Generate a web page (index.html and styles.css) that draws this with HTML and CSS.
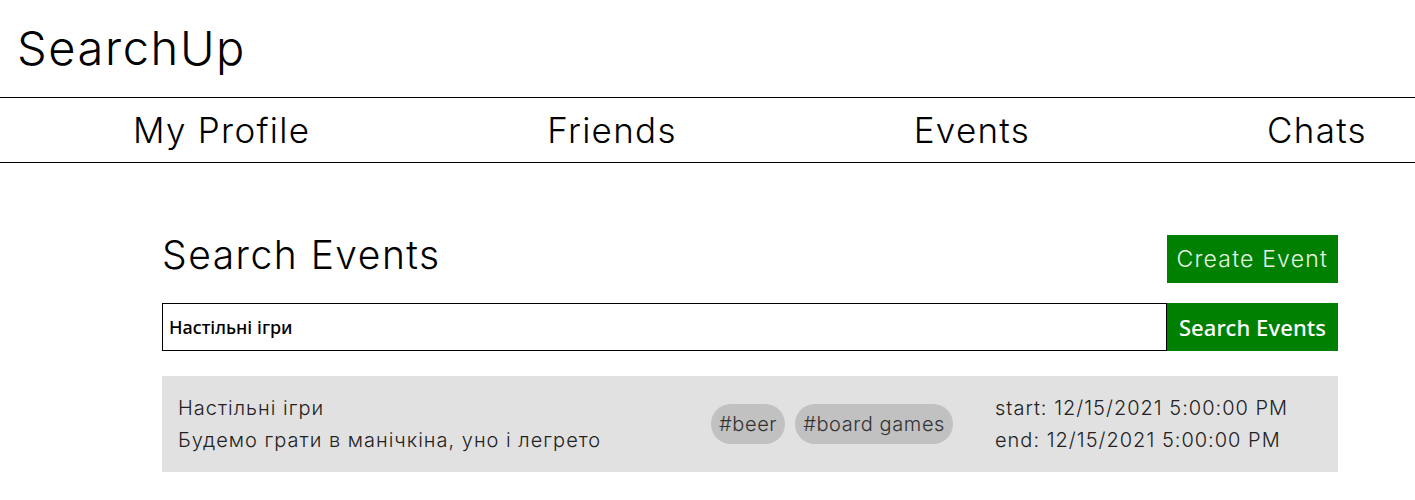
FILE: index.html
```html
<!DOCTYPE html>
<html lang="uk">
<head>
<meta charset="utf-8">
<title>SearchUp</title>
<link rel="stylesheet" href="styles.css">
</head>
<body>
<header class="top">
  <div class="logo">SearchUp</div>
</header>
<nav class="nav">
  <a class="nav-link" href="#">My Profile</a>
  <a class="nav-link" href="#">Friends</a>
  <a class="nav-link" href="#">Events</a>
  <a class="nav-link" href="#">Chats</a>
</nav>
<main class="content">
  <div class="head-row">
    <h2 class="title">Search Events</h2>
    <button class="create-btn" type="button">Create Event</button>
  </div>
  <form class="search">
    <input class="search-input" type="text" value="Настільні ігри">
    <button class="search-btn" type="button">Search Events</button>
  </form>
  <div class="card">
    <div class="card-info">
      <div class="card-line">Настільні ігри</div>
      <div class="card-line">Будемо грати в манічкіна, уно і легрето</div>
    </div>
    <div class="tags">
      <span class="tag">#beer</span>
      <span class="tag">#board games</span>
    </div>
    <div class="dates">
      <div class="card-line">start: 12/15/2021 5:00:00 PM</div>
      <div class="card-line">end: 12/15/2021 5:00:00 PM</div>
    </div>
  </div>
</main>
</body>
</html>
```
FILE: styles.css
```css
* { box-sizing: border-box; }
body {
  margin: 0;
  font-family: Inter, "Noto Sans", sans-serif;
  font-weight: 300;
  color: #000;
  background: #fff;
}
.top {
  height: 97px;
  padding: 20px 0 0 17px;
}
.logo {
  font-size: 47px;
  line-height: 56px;
  font-weight: 300;
  letter-spacing: 1.6px;
}
.nav {
  display: flex;
  justify-content: space-between;
  align-items: center;
  height: 66px;
  border-top: 1px solid #000;
  border-bottom: 1px solid #000;
  padding: 0 48px 0 133px;
}
.nav-link {
  font-size: 35px;
  color: #000;
  text-decoration: none;
  font-weight: 300;
  letter-spacing: 1.3px;
}
.content {
  margin: 72px 0 0 162px;
  width: 1176px;
}
.head-row {
  display: flex;
  justify-content: space-between;
  align-items: flex-start;
}
.title {
  margin: 0;
  font-size: 39px;
  line-height: 40px;
  font-weight: 300;
  letter-spacing: 1.5px;
}
.create-btn {
  height: 48px;
  padding: 0 10px;
  border: none;
  background: #008000;
  color: #e6f4e6;
  font-family: Inter, sans-serif;
  font-weight: 300;
  font-size: 23px;
  letter-spacing: 1.2px;
}
.search {
  display: flex;
  margin-top: 20px;
  height: 48px;
}
.search-input {
  flex: 1;
  border: 1px solid #000;
  padding: 0 6px;
  font-family: "Noto Sans", sans-serif;
  font-size: 18px;
  font-weight: 500;
  color: #000;
}
.search-btn {
  border: none;
  background: #008000;
  color: #fff;
  padding: 0 8px;
  font-family: "Noto Sans", sans-serif;
  font-size: 22px;
  font-weight: 500;
  letter-spacing: 0.1px;
  width: 171px;
}
.card {
  margin-top: 25px;
  background: #e1e1e1;
  display: grid;
  grid-template-columns: 1fr auto 327px;
  column-gap: 42px;
  align-items: center;
  padding: 16px 16px;
  min-height: 95px;
}
.card-line {
  font-size: 20px;
  line-height: 32px;
  color: #222;
  letter-spacing: 1px;
  white-space: nowrap;
}
.tags {
  display: flex;
  gap: 10px;
}
.tag {
  background: #c1c1c1;
  border-radius: 20px;
  padding: 0 8px;
  height: 40px;
  line-height: 40px;
  font-size: 20px;
  letter-spacing: 0.6px;
  color: #333;
}
```
